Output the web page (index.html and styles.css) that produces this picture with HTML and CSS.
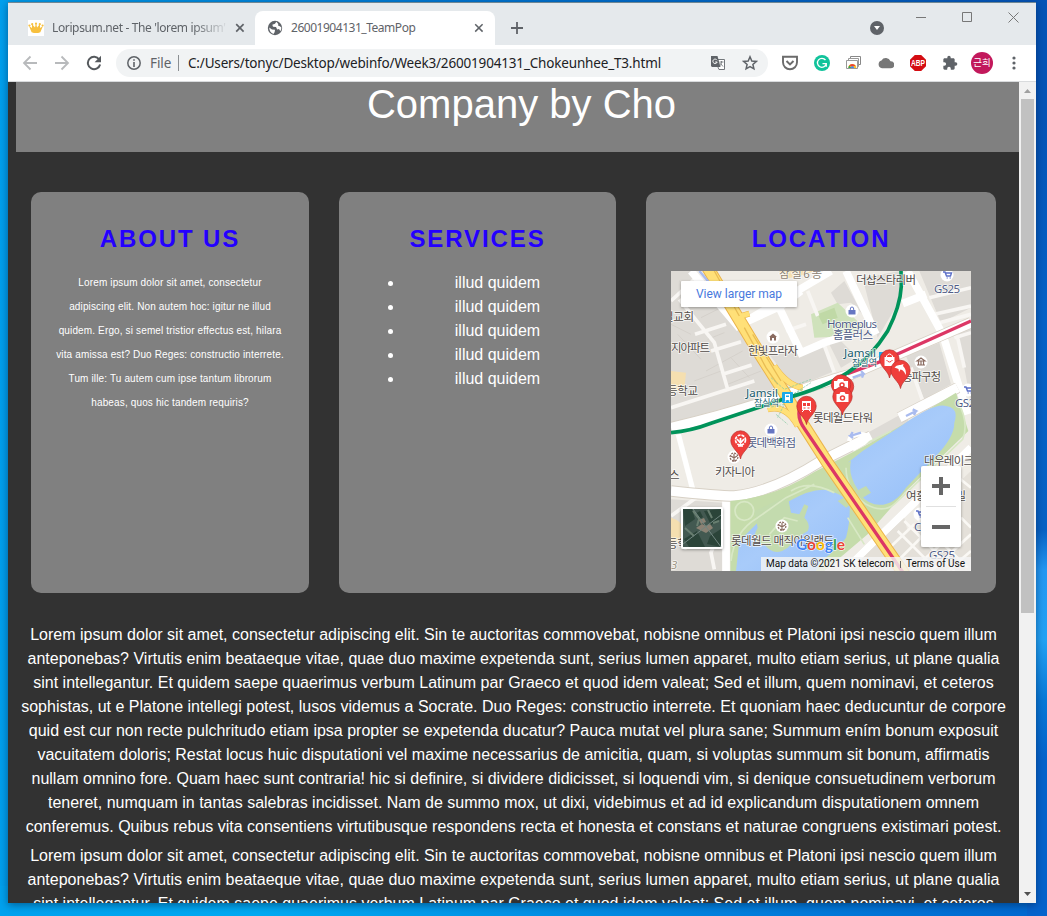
FILE: index.html
```html
<!DOCTYPE html>
<html lang="en">
<head>
<meta charset="utf-8">
<title>26001904131_TeamPop</title>
<link rel="stylesheet" href="styles.css">
</head>
<body>
<div class="window">
  <div class="tabstrip">
    <div class="tab tab-idle">
      <svg class="favicon" width="16" height="16"><rect width="16" height="16" fill="#fff"/><path d="M3.6 12.2 1 6l3 2L4 4l3 3.5L8 3l1.1 4.5L12 4v4l3-2-2.7 6.2q-4.3 1.7-8.7 0z" fill="#f7c03e"/><circle cx="1.4" cy="5.5" r="1.1" fill="#f7c03e"/><circle cx="4.2" cy="4.2" r="1.1" fill="#f7c03e"/><circle cx="8" cy="3.7" r="1.1" fill="#f7c03e"/><circle cx="11.8" cy="4.2" r="1.1" fill="#f7c03e"/><circle cx="14.6" cy="5.5" r="1.1" fill="#f7c03e"/></svg>
      <span class="tab-title fade">Loripsum.net - The 'lorem ipsum'</span>
      <svg class="close" width="10" height="10"><path d="M1.2 1.2l7.4 7.4M8.6 1.2 1.2 8.6" stroke="#5f6368" stroke-width="1.7"/></svg>
    </div>
    <div class="tab tab-active">
      <svg class="favicon" width="16" height="16" viewBox="0 0 16 16"><circle cx="8" cy="8" r="7.2" fill="#5f6368"/><path d="M9.3 1.7 8 3.8 5.3 4.7 6 6.7 9 7l1.2 2.4 1.8-.5 1.4 2.4q1.2-2 .9-4L12.3 6 11 5.5l.3-1.6zM2.2 7.5 5 9.4 8 9.7 7.7 12l-1.2 2.1Q2.5 12.6 2.2 7.5z" fill="#fff"/></svg>
      <span class="tab-title">26001904131_TeamPop</span>
      <svg class="close" width="10" height="10"><path d="M1.2 1.2l7.4 7.4M8.6 1.2 1.2 8.6" stroke="#5f6368" stroke-width="1.5"/></svg>
    </div>
    <svg class="newtab" width="14" height="14"><path d="M7 1v12M1 7h12" stroke="#5f6368" stroke-width="1.8"/></svg>
    <div class="caption">
      <svg class="search-tabs" width="14" height="14"><circle cx="7" cy="7" r="7" fill="#5f6368"/><path d="M4 5h6L7 9z" fill="#fff"/></svg>
      <svg class="min" width="10" height="10"><path d="M0 4.5h10" stroke="#777"/></svg>
      <svg class="max" width="10" height="10"><path d="M.5.5h9v9h-9z" fill="none" stroke="#777"/></svg>
      <svg class="exit" width="11" height="11"><path d="M.5.5l10 10M10.5.5l-10 10" stroke="#777"/></svg>
    </div>
  </div>
  <div class="toolbar">
    <svg class="nav" width="16" height="16"><path d="M15 8H2M8.5 1.5 2 8l6.5 6.5" fill="none" stroke="#b8babc" stroke-width="1.8"/></svg>
    <svg class="nav" width="16" height="16"><path d="M1 8h13M7.5 1.5 14 8l-6.5 6.5" fill="none" stroke="#b8babc" stroke-width="1.8"/></svg>
    <svg class="nav" width="16" height="16"><path d="M13.2 4.5A6.2 6.2 0 1 0 14.1 9.5" fill="none" stroke="#55595d" stroke-width="2"/><path d="M15 .8v6.4H8.6z" fill="#55595d"/></svg>
    <div class="omnibox">
      <svg width="14" height="14"><circle cx="7" cy="7" r="6.2" fill="none" stroke="#5f6368" stroke-width="1.5"/><path d="M7 6v5M7 3.2v1.6" stroke="#5f6368" stroke-width="1.6"/></svg>
      <span class="scheme">File</span>
      <span class="url">C:/Users/tonyc/Desktop/webinfo/Week3/26001904131_Chokeunhee_T3.html</span>
      <svg class="translate" width="14" height="14"><path d="M6 3.5h7.5v10H8L6.5 10" fill="#fff" stroke="#73777b"/><path d="M0 0h6.5L9.5 11H1L0 10z" fill="#5f6368"/><path d="M6 4.2A2.2 2.2 0 1 0 6.2 6H4.2" fill="none" stroke="#fff"/><path d="M8.5 6h4M10.5 5v1c0 2-1 3-2 4M9.5 7.5l2.5 3" fill="none" stroke="#73777b" stroke-width=".9"/></svg>
      <svg class="star" width="16" height="16"><path d="M8 1.8 9.8 6l4.5.4-3.4 3 1 4.4L8 11.5l-3.9 2.3 1-4.4-3.400-3L6.200 6z" fill="none" stroke="#5f6368" stroke-width="1.5"/></svg>
    </div>
    <div class="extensions">
      <svg width="16" height="16"><path d="M1 1.8h14v5.500a7 7 0 0 1-14 0z" fill="none" stroke="#6b6b6b" stroke-width="1.9"/><path d="m4.500 6 3.500 3.400L11.500 6" fill="none" stroke="#6b6b6b" stroke-width="2"/></svg>
      <svg width="16" height="16"><circle cx="8" cy="8" r="8" fill="#11c39b"/><path d="M11.500 5A4.500 4.500 0 1 0 12.300 9M8.500 8.700h3.800v3" fill="none" stroke="#fff" stroke-width="1.3"/></svg>
      <svg width="16" height="16"><path d="M4.500 4V1.500h10v8H13" fill="#fff" stroke="#888"/><path d="M2.500 6V3.500h10v8H12" fill="#fff" stroke="#999"/><path d="M.5 5.500h11v8H.5z" fill="#fff" stroke="#999"/><path d="M2.300 13a4 4 0 0 1 8 0H7z" fill="#fbc02d"/><path d="M2.300 13a4 4 0 0 1 1-2.600L5.500 13z" fill="#35a853"/><path d="M3 10.800Q6 7 9.600 10.800L6.300 11.500z" fill="#ea4335"/><path d="M4.500 13a1.800 1.800 0 0 1 3.600 0z" fill="#4285f4"/></svg>
      <svg width="16" height="16"><path d="M4 13.300a4 4 0 0 1-.5-7.800A5 5 0 0 1 12.500 6.300a3.500 3.500 0 0 1 .5 7z" fill="#777"/></svg>
      <svg width="16" height="16"><path d="M4.800 0h6.400L16 4.800v6.400L11.200 16H4.800L0 11.200V4.800z" fill="#d40d12"/><text x="1" y="11" class="abp" textLength="14" lengthAdjust="spacingAndGlyphs">ABP</text></svg>
      <svg width="16" height="16" viewBox="0 0 24 24"><path d="M20.500 11H19V7c0-1.100-.9-2-2-2h-4V3.500a2.500 2.500 0 0 0-5 0V5H4c-1.100 0-2 .9-2 2v3.800h1.500a2.700 2.700 0 0 1 0 5.400H2V20c0 1.100.9 2 2 2h3.800v-1.500a2.700 2.700 0 0 1 5.400 0V22H17c1.100 0 2-.9 2-2v-4h1.500a2.500 2.500 0 0 0 0-5z" fill="#5f6368"/></svg>
      <span class="avatar">근희</span>
      <svg width="4" height="16"><g fill="#5f6368"><circle cx="2" cy="3" r="1.6"/><circle cx="2" cy="8" r="1.6"/><circle cx="2" cy="13" r="1.6"/></g></svg>
    </div>
  </div>
  <div class="viewport">
    <main class="page">
      <header class="banner"><h1>Company by Cho</h1></header>
      <div class="cards">
        <section class="card card-about">
          <h2>ABOUT US</h2>
          <p>Lorem ipsum dolor sit amet, consectetur<br>adipiscing elit. Non autem hoc: igitur ne illud<br>quidem. Ergo, si semel tristior effectus est, hilara<br>vita amissa est? Duo Reges: constructio interrete.<br>Tum ille: Tu autem cum ipse tantum librorum<br>habeas, quos hic tandem requiris?</p>
        </section>
        <section class="card card-services">
          <h2>SERVICES</h2>
          <ul><li>illud quidem</li><li>illud quidem</li><li>illud quidem</li><li>illud quidem</li><li>illud quidem</li></ul>
        </section>
        <section class="card card-location">
          <h2>LOCATION</h2>
          <svg class="map" width="300" height="300" viewBox="0 0 300 300">
            <defs>
              <linearGradient id="lake" x1="0" y1="0" x2="1" y2="1"><stop offset="0" stop-color="#8bb9f6"/><stop offset=".5" stop-color="#a8cbfa"/><stop offset="1" stop-color="#85b4f7"/></linearGradient>
              <filter id="shade" x="-20%" y="-20%" width="140%" height="150%"><feDropShadow dx="0" dy="1" stdDeviation="1.5" flood-opacity=".35"/></filter>
              <path id="pin" d="M0 0C-1-7-9.700-11-9.700-18.500a9.700 9.700 0 0 1 19.400 0C9.700-11 1-7 0 0z" fill="#ef3f3b" stroke="#b92f2d" stroke-width=".7"/>
              <g id="cart"><circle r="6.500" fill="#fff"/><path d="M-4-3h2l1.500 4h4l1-3h-6M-.3 3h.9M2.700 3h.9" fill="none" stroke="#5d70c8" stroke-width="1.400"/></g>
              <g id="bag"><circle r="6.500" fill="#fff"/><path d="M-3.500-1h7v4.500h-7z" fill="#6676c2"/><path d="M-1.700-1v-1q0-2 1.700-2t1.700 2v1" fill="none" stroke="#6676c2"/></g>
              <g id="flower" fill="none" stroke="#8a6b60" stroke-width="1.200"><circle r="6.500" fill="#fff" stroke="none"/><circle r="3.900" stroke-dasharray="2 1"/><path d="M0-3V4M-3-1l3 2 3-2M-2 4h4"/></g>
            </defs>
            <rect width="300" height="300" fill="#efece6"/>
            <g transform="scale(.333333)">
              <g fill="#dedbd6">
                <path d="M0 0H70L190 160 330 365 0 455z"/>
                <path d="M275 225 305 250 385 245 455 215 485 302 370 350 310 270z"/>
                <path d="M480 65 520 30 575 130 540 95 500 100zM575 20 690 0 685 90 620 200zM730 0H900V110L810 155 745 0z"/>
                <path d="M705 255 805 215 840 340 760 385 720 290zM470 210 500 200 560 260 510 290zM860 180 900 165V400z"/>
                <path d="M0 685 155 695V900H0zM590 485 690 430 720 455 600 515z"/>
              </g>
              <path d="M420 130 500 95l75 70-40 30-105 5z" fill="#cfe2bb"/><path d="M440 130 490 110 500 140 455 160z" fill="#c0d9a6"/>
              <path d="M0 300 45 305 40 355 0 365zM0 740q40 10 35 45t-35 30zM325 0h110l-50 15-50 10z" fill="#f5dfb0"/>
              <g fill="none" stroke="#d0ccc6" stroke-width="2"><path d="M30 110 100 85M90 140 150 110M20 190 90 265M105 300 215 240M170 340 270 300M25 30 70 70M0 160 60 190M110 205l50-20M180 260l55 60M70 330l80-30"/></g>
              <g fill="none" stroke="#f8f6f3" stroke-width="11">
                <path d="M25 85 130 215 170 355M72 190 165 160M120 240 210 212M155 310 242 282M0 410 250 330M0 90 70 25M0 735 75 680M60 750q60 0 80 45l-20 50 10 50M410 60 440 135M345 180l60-20"/>
                <path d="M790 130 900 105M805 155 900 130M820 205 850 300M860 200 880 290M850 200 900 185M720 290 755 390M775 80 900 50M455 210 490 305"/>
              </g>
              <g fill="none" stroke="#fff" stroke-width="23">
                <path d="M60 0 200 165 480 0M220 155 330 105 390 60M320 100 390 245 460 215 540 190M525 0 615 190M710 0 815 190 890 430M695 98 765 70M165 680V900M520 900 900 530"/>
                <path d="M22 490 65 655" stroke-width="16"/>
              </g>
              <path d="M0 470Q170 430 350 370T540 310L900 155M0 660Q140 675 190 675 300 665 450 570L600 495M685 440 860 350" fill="none" stroke="#d7d0c5" stroke-width="34"/>
              <path d="M0 470Q170 430 350 370T540 310L900 155M0 660Q140 675 190 675 300 665 450 570L600 495M685 440 860 350" fill="none" stroke="#fff" stroke-width="29"/>
              <path d="M178 690Q310 680 430 603L600 515 740 435 855 365 892 480 700 665 590 790 460 900H178z" fill="#c5dcab"/>
              <path d="M530 575 575 540 690 465Q790 395 825 405 865 410 850 455 850 500 790 560L705 650Q665 710 610 700 575 690 560 655 530 610 540 570zM195 900 205 810 265 750 355 690Q435 645 480 660 520 675 535 695 540 745 525 800 500 835 450 870L435 900z" fill="url(#lake)"/>
              <path d="M250 720 350 675 360 725 385 730 400 700 412 705 400 740Q420 760 410 780 375 800 350 830 310 860 280 820 235 815 260 770z" fill="#c3dbae"/>
              <path d="M500 690l85-45 15 20-75 45z" fill="#c3dbae"/>
              <g fill="none" stroke="#d8e8c5" stroke-width="5"><circle cx="220" cy="720" r="28"/><path d="M180 870q10-90 80-130l85-60 85-40M360 660q50-35 130 5M525 590q0 65 60 110 55 30 90-5l200-190q20-50-15-115M580 520l80-40M530 740l50 80M295 790l45-50 40 10"/></g>
              <path d="M520 910 700 740 710 780 900 600V900z" fill="#e4e0d9"/>
              <path d="M520 900 750 675 900 530" fill="none" stroke="#fff" stroke-width="20"/>
              <g stroke="#faf8f4" stroke-width="8" fill="none"><path d="M680 780 790 890M700 750 850 900M730 735 890 890M870 740l30 30M850 610 900 650M640 845 730 760M680 870 770 780M720 900 810 820M780 900 900 790M830 900l70-60"/></g>
              <path d="M535 510q0-20 40-20 30 5 5 25l-35 20" fill="none" stroke="#fff" stroke-width="13"/>
              <g fill="none">
                <path d="M195 140 235 128M310 285Q350 345 395 350M290 415Q345 400 380 465" stroke="#eab44c" stroke-width="18"/>
                <path d="M110-10 210 155 270 255 340 365 396 460 468 573 545 685 700 910" stroke="#eab44c" stroke-width="38"/>
                <path d="M110-10 210 155 270 255 340 365 396 460 468 573 545 685 700 910" stroke="#ffe078" stroke-width="32"/>
                <path d="M195 140 235 128M310 285Q350 345 395 350M290 415Q345 400 380 465" stroke="#ffe078" stroke-width="15"/>
                <path d="M130 0 205 135M220 170 285 290 320 340M245 190 330 330" stroke="#e9bd55" stroke-width="4"/>
                <path d="M300 320l40 35 80-30M330 390l65-35M290 410l50-10-20 40M350 380l70-45M315 430l35 30" stroke="#83c7a1" stroke-width="2" stroke-dasharray="8 3"/>
                <path d="M900 150 700 240 620 275 530 308M395 395Q370 430 401 474L468 573 545 685 695 903" stroke="#dc3765" stroke-width="10"/>
                <path d="M690 0 691 45Q688 105 650 180 600 260 530 305 460 350 350 380L120 457Q60 480 0 485" stroke="#00935a" stroke-width="11"/>
                <path d="M85 0 115 35M545 320l33-12-8-8m8 8-5 12M705 435l30-15-10-5m10 5-6 12M570 485l-32 10 8 6m-8-6 7-12" stroke="#a9bbef" stroke-width="7"/>
              </g>
            </g>
            <g transform="translate(102 66)"><circle r="6.500" fill="#fff"/><path d="M-4 0 0-3.500 4 0H3v3.500H1V1h-2v2.500h-2V0z" fill="#8a6b60"/></g>
            <use href="#bag" x="181" y="40"/><use href="#bag" x="100" y="159"/><use href="#cart" x="276" y="4"/><use href="#cart" x="297" y="119"/><use href="#cart" x="249" y="243"/>
            <use href="#flower" x="63" y="186"/><use href="#flower" x="111" y="255"/>
            <g transform="translate(250 91)"><circle r="6.500" fill="#fff"/><path d="M-4-1 0-4l4 3zM-4 3h8M-2.500-1v4M0-1v4M2.500-1v4" fill="none" stroke="#8a6b60" stroke-width="1.200"/></g>
            <g class="map-text">
              <text x="108" y="7" textLength="43" fill="#8d8374">잠실6동</text>
              <text x="-8" y="50" textLength="31">길교회</text><text x="0" y="81" textLength="39">지아파트</text><text x="-4" y="124" textLength="31">등학교</text>
              <text x="77" y="84" textLength="50">한빛프라자</text><text x="185" y="13" textLength="60">더샵스타리버</text>
              <text x="263" y="22" textLength="26" fill="#505d87">GS25</text><text x="284" y="136" textLength="26" fill="#505d87">GS25</text><text x="258" y="288" textLength="26" fill="#505d87">GS25</text>
              <text x="156" y="57" textLength="50" fill="#505d87">Homeplus</text><text x="162" y="68" textLength="40" fill="#505d87">홈플러스</text>
              <text x="173" y="86" textLength="32" class="station">Jamsil</text><text x="181" y="95" textLength="25" class="station-ko">잠실역</text>
              <text x="75" y="126" textLength="32" class="station">Jamsil</text><text x="83" y="135" textLength="25" class="station-ko">잠실역</text>
              <text x="231" y="110" textLength="39">송파구청</text><text x="142" y="151" textLength="60">롯데월드타워</text><text x="76" y="176" textLength="49" fill="#505d87">롯데백화점</text><text x="44" y="205" textLength="40">키자니아</text>
              <text x="-2" y="208">스</text><text x="-4" y="277" textLength="31">등학교</text><text x="60" y="274" textLength="103">롯데월드 매직아일랜드</text>
              <text x="253" y="194" textLength="60">대우레이크빌</text><text x="235" y="229" textLength="60">여흥레이크빌</text><text x="243" y="260" fill="#505d87">CU</text><text x="0" y="298" fill="#9d9585" font-style="italic">3</text>
            </g>
            <g><rect x="111" y="121" width="11" height="11" rx="1" fill="#1aaae8"/><path d="M114 123h5v6h-5z" fill="#fff"/><path d="M115 124.500h3v1.500h-3z" fill="#1aaae8"/><path d="M114 131l1-2m4 2-1-2" stroke="#fff"/></g>
            <rect x="208" y="81" width="8" height="8" fill="#1aaae8"/>
            <use href="#pin" x="173" y="134"/><use href="#pin" x="170" y="132"/><path d="M163 110h3l1-2h5l1 2h4v8h-14z" fill="#fff"/><circle cx="171" cy="114" r="2" fill="none" stroke="#ef3f3b" stroke-width="1.500"/>
            <use href="#pin" x="171.500" y="144"/><path d="M165.500 123h3l1-2h4l1 2h3v8h-12z" fill="#fff"/><circle cx="171.500" cy="127" r="2" fill="none" stroke="#ef3f3b" stroke-width="1.500"/>
            <use href="#pin" x="218.500" y="107"/><path d="M213.500 86h10v9h-10z" fill="#fff"/><path d="M215.500 87v-2q3-4 6 0v2" fill="none" stroke="#fff"/><path d="M215.500 89q3 4 6 0" fill="none" stroke="#ef3f3b"/>
            <use href="#pin" x="229.500" y="117.500"/><path d="M223.500 96.500q2-3 6-2.500l3-1-.5 2q4 4 2.500 9-1.500-5-5-5.500l-1.500 2.500-.5-3z" fill="#fff"/>
            <use href="#pin" x="135.500" y="153.500"/><path d="M131 130h9v9h-9z" fill="#fff"/><path d="M132 132h3v3h-3zm4 0h3v3h-3zM132.500 136.500h2v1h-2zm4 0h2v1h-2z" fill="#ef3f3b"/><path d="M131 141l2-2m7 2-2-2" stroke="#fff"/>
            <use href="#pin" x="69.500" y="188"/><g fill="none" stroke="#fff" stroke-width="1.700"><circle cx="69.500" cy="169" r="5" stroke-dasharray="3 1"/><path d="M69.500 167v8M66 168l3.500 4 3.500-4M67 175h5"/></g>
            <g filter="url(#shade)"><rect x="10" y="10" width="116" height="26" rx="1" fill="#fff"/><rect x="10" y="236" width="42" height="42" rx="2" fill="#fff"/><rect x="250" y="195" width="40" height="81" rx="2" fill="#fff"/></g>
            <text x="25" y="27" textLength="86" class="map-link">View larger map</text>
            <rect x="12" y="238" width="38" height="38" fill="#435951"/>
            <path d="M12 238h9l3 10-10 7zM33 240l17-2v10l-10 6zM13 268l13-8 8 16H18zM24 243l5-3 3 6-5 3zM39 265l11-7v18l-14-3z" fill="#2b4439"/><path d="M22 240l6 8-2 7M37 239l4 8M14 257l9 8M42 252l6-2" fill="none" stroke="#687e70" stroke-width="2"/><path d="M25 257l6-4 4 2 4-2 3 4-7 5zM28 249l5-2 2 4-5 2z" fill="#8b8274"/><path d="M12 273 50 244M22 238 50 276" stroke="#718680" stroke-width="1"/>
            <path d="M261 215h18M270 206v18M261 256h18" stroke="#666" stroke-width="4"/><path d="M255 235.500h30" stroke="#e0e0e0"/>
            <text x="125" y="279" class="logo" textLength="49" lengthAdjust="spacingAndGlyphs"><tspan fill="#4285f4">G</tspan><tspan fill="#ea4335">o</tspan><tspan fill="#fbbc04">o</tspan><tspan fill="#4285f4">g</tspan><tspan fill="#34a853">l</tspan><tspan fill="#ea4335">e</tspan></text>
            <rect x="90" y="286" width="210" height="14" fill="#f5f5f5" opacity=".8"/>
            <text x="95" y="296" class="credit" textLength="128">Map data ©2021 SK telecom</text><path d="M229.500 290v7" stroke="#666"/><text x="235" y="296" class="credit" textLength="59">Terms of Use</text>
          </svg>
        </section>
      </div>
      <div class="copy">
        <p>Lorem ipsum dolor sit amet, consectetur adipiscing elit. Sin te auctoritas commovebat, nobisne omnibus et Platoni ipsi nescio quem illum<br>anteponebas? Virtutis enim beataeque vitae, quae duo maxime expetenda sunt, serius lumen apparet, multo etiam serius, ut plane qualia<br>sint intellegantur. Et quidem saepe quaerimus verbum Latinum par Graeco et quod idem valeat; Sed et illum, quem nominavi, et ceteros<br>sophistas, ut e Platone intellegi potest, lusos videmus a Socrate. Duo Reges: constructio interrete. Et quoniam haec deducuntur de corpore<br>quid est cur non recte pulchritudo etiam ipsa propter se expetenda ducatur? Pauca mutat vel plura sane; Summum ením bonum exposuit<br>vacuitatem doloris; Restat locus huic disputationi vel maxime necessarius de amicitia, quam, si voluptas summum sit bonum, affirmatis<br>nullam omnino fore. Quam haec sunt contraria! hic si definire, si dividere didicisset, si loquendi vim, si denique consuetudinem verborum<br>teneret, numquam in tantas salebras incidisset. Nam de summo mox, ut dixi, videbimus et ad id explicandum disputationem omnem<br>conferemus. Quibus rebus vita consentiens virtutibusque respondens recta et honesta et constans et naturae congruens existimari potest.</p>
        <p>Lorem ipsum dolor sit amet, consectetur adipiscing elit. Sin te auctoritas commovebat, nobisne omnibus et Platoni ipsi nescio quem illum<br>anteponebas? Virtutis enim beataeque vitae, quae duo maxime expetenda sunt, serius lumen apparet, multo etiam serius, ut plane qualia<br>sint intellegantur. Et quidem saepe quaerimus verbum Latinum par Graeco et quod idem valeat; Sed et illum, quem nominavi, et ceteros</p>
      </div>
    </main>
    <div class="scrollbar">
      <svg width="17" height="17"><path d="M5 11h7L8.500 7z" fill="#a0a0a0"/></svg>
      <div class="thumb"></div>
      <svg class="down" width="17" height="17"><path d="M5 6h7L8.500 10z" fill="#505050"/></svg>
    </div>
  </div>
</div>
</body>
</html>
```

FILE: styles.css
```css
* { box-sizing: border-box; }
html, body { height: 100%; margin: 0; overflow: hidden; }
body {
  padding: 2px 11px 13px 8px;
  font-family: "Liberation Sans", Arial, sans-serif;
  background:
    linear-gradient(180deg, #0554b7 0, #0554b7 120px, #0562c8 320px, #0762c5 530px, #2498f3 570px, #23a3f5 640px, #0879d8 700px, #0563cc 760px, #0563cc 100%) right / 20px 100% no-repeat,
    linear-gradient(90deg, #00a2ef 0, #00aaf2 25%, #0083df 65%, #0068d0 100%) bottom / 100% 30px no-repeat,
    linear-gradient(90deg, #00a0ee 0, #0078d4 45%, #0554b7 100%);
}
svg { display: block; flex: none; }
.window {
  height: 901px;
  display: flex;
  flex-direction: column;
  border-top: 1px solid #6f8794;
  box-shadow: 0 2px 8px rgba(0, 25, 60, .5);
}
.tabstrip {
  flex: none;
  height: 42px;
  padding-top: 8px;
  display: flex;
  background: #e5e9ec;
}
.tab { display: flex; align-items: center; height: 34px; color: #5f6368; }
.tab-idle { width: 247px; padding-left: 20px; }
.tab-active { width: 240px; padding-left: 12px; border-radius: 8px 8px 0 0; background: #fff; }
.tab-title {
  width: 174px;
  margin-left: 8px;
  white-space: nowrap;
  font: 12px/18px "Noto Sans", sans-serif;
}
.tab-active .tab-title { letter-spacing: -.47px; }
.fade {
  letter-spacing: -.37px;
  -webkit-mask-image: linear-gradient(90deg, #000 140px, transparent 178px);
}
.tab .close { margin-left: 9px; }
.newtab { margin: 10px 0 0 15px; }
.caption { display: flex; margin-left: auto; }
.search-tabs { margin: 10px 32px 0 0; }
.min { margin: 2px 36px 0 0; }
.max { margin: 1px 36px 0 0; }
.exit { margin: 1px 17px 0 0; }
.toolbar {
  flex: none;
  height: 37px;
  padding-left: 14px;
  display: flex;
  align-items: center;
  background: #fff;
  border-bottom: 1px solid #d9dbdd;
}
.nav { margin-right: 16px; }
.omnibox {
  width: 652px;
  height: 28px;
  margin-left: -2px;
  padding: 0 10px 0 11px;
  border-radius: 14px;
  background: #f1f3f4;
  display: flex;
  align-items: center;
  font: 13.5px/18px "Noto Sans", sans-serif;
}
.scheme {
  width: 28px;
  height: 16px;
  margin-left: 9px;
  line-height: 16px;
  letter-spacing: -.1px;
  box-sizing: content-box;
  border-right: 1px solid #8b8f92;
  color: #5f6368;
}
.url { margin-left: 9px; color: #202124; white-space: nowrap; letter-spacing: -.17px; }
.translate { margin-left: auto; }
.star { margin-left: 17px; }
.extensions { display: flex; align-items: center; gap: 16px; margin-left: 14px; }
.abp { font: bold 9px "Liberation Sans", sans-serif; fill: #fff; }
.avatar {
  width: 22px;
  height: 22px;
  margin: 0 -3px;
  border-radius: 50%;
  background: #c2185b;
  color: #fff;
  text-align: center;
  font: 9.5px/21px "Noto Sans CJK KR", sans-serif;
}
.extensions svg:last-child { margin-left: 6px; }
.viewport { flex: 1; min-height: 0; display: flex; overflow: hidden; }
.page {
  width: 1011px;
  padding-left: 8px;
  overflow: hidden;
  background: #323232;
  color: #fff;
}
.banner { width: 1011px; height: 70px; background: #808080; }
h1 { margin: 0; font-size: 40px; font-weight: 400; line-height: 44px; text-align: center; }
.cards { display: flex; gap: 30px; padding: 40px 0 0 15px; }
.card { flex: none; height: 401px; padding: 30px 25px; border-radius: 10px; background: #808080; text-align: center; }
.card-about { width: 278px; }
.card-services { width: 277px; }
.card-location { width: 350px; }
h2 { margin: 0; color: #2400ff; font-size: 24px; line-height: 34px; letter-spacing: 1.9px; }
.card-about p { margin: 15px -10px 0; font-size: 10px; letter-spacing: .14px; line-height: 24px; white-space: nowrap; }
.card ul { margin: 15px 0 0; padding: 0 0 0 40px; line-height: 24px; }
.map { margin-top: 15px; overflow: hidden; }
.map-text { font: 11.5px "Noto Sans", "Noto Sans CJK KR", sans-serif; fill: #514b48; stroke: #fff; stroke-width: 1.5px; stroke-opacity: .8; paint-order: stroke; }
.station { fill: #175c6d; }
.station-ko { font-size: 9px; fill: #175c6d; }
.map-link { font: 12px Roboto, sans-serif; fill: #4879dd; }
.logo { font: bold 16px Lato, sans-serif; stroke: #fff; stroke-width: 1px; paint-order: stroke; }
.credit { font: 10px Roboto, sans-serif; fill: #111; }
.copy { width: 995px; padding-top: 30px; text-align: center; font-size: 16px; line-height: 24px; }
.copy p { margin: 0 -20px 5px; white-space: nowrap; }
.scrollbar { flex: none; width: 17px; display: flex; flex-direction: column; align-items: center; background: #f1f1f1; }
.thumb { width: 13px; height: 514px; background: #c1c1c1; }
.down { margin-top: auto; }
```
